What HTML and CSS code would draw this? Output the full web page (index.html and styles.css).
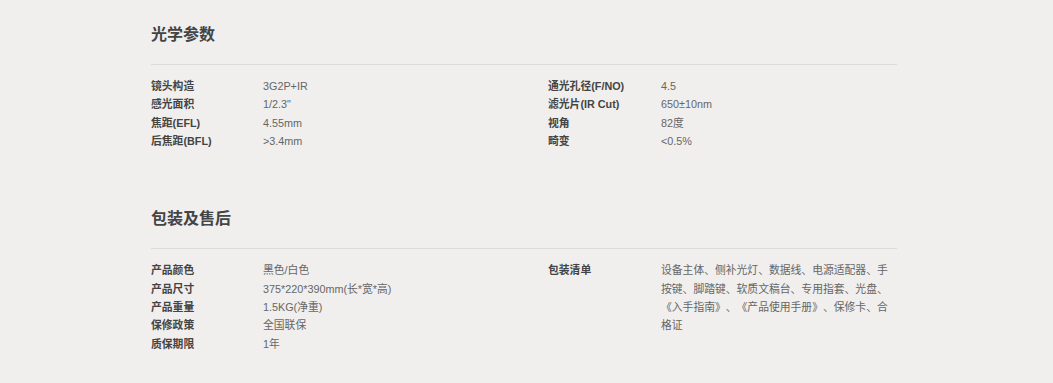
FILE: index.html
```html
<!DOCTYPE html>
<html lang="zh-CN">
<head>
<meta charset="utf-8">
<title>参数</title>
<link rel="stylesheet" href="styles.css">
</head>
<body>
<div class="page">
  <section class="spec first">
    <h2 class="spec-title">光学参数</h2>
    <div class="spec-body">
      <dl class="spec-col left">
        <div class="row"><dt>镜头构造</dt><dd>3G2P+IR</dd></div>
        <div class="row"><dt>感光面积</dt><dd>1/2.3"</dd></div>
        <div class="row"><dt>焦距(EFL)</dt><dd>4.55mm</dd></div>
        <div class="row"><dt>后焦距(BFL)</dt><dd>&gt;3.4mm</dd></div>
      </dl>
      <dl class="spec-col right">
        <div class="row"><dt>通光孔径(F/NO)</dt><dd>4.5</dd></div>
        <div class="row"><dt>滤光片(IR Cut)</dt><dd>650±10nm</dd></div>
        <div class="row"><dt>视角</dt><dd>82度</dd></div>
        <div class="row"><dt>畸变</dt><dd>&lt;0.5%</dd></div>
      </dl>
    </div>
  </section>
  <section class="spec second">
    <h2 class="spec-title">包装及售后</h2>
    <div class="spec-body">
      <dl class="spec-col left">
        <div class="row"><dt>产品颜色</dt><dd>黑色/白色</dd></div>
        <div class="row"><dt>产品尺寸</dt><dd>375*220*390mm(长*宽*高)</dd></div>
        <div class="row"><dt>产品重量</dt><dd>1.5KG(净重)</dd></div>
        <div class="row"><dt>保修政策</dt><dd>全国联保</dd></div>
        <div class="row"><dt>质保期限</dt><dd>1年</dd></div>
      </dl>
      <dl class="spec-col right">
        <div class="row"><dt>包装清单</dt><dd class="list">设备主体、侧补光灯、数据线、电源适配器、手按键、脚踏键、软质文稿台、专用指套、光盘、《入手指南》、《产品使用手册》、保修卡、合格证</dd></div>
      </dl>
    </div>
  </section>
</div>
</body>
</html>
```
FILE: styles.css
```css
html, body {
  margin: 0;
  padding: 0;
  background: #f0efed;
}
body {
  font-family: "Liberation Sans", "Noto Sans CJK SC", sans-serif;
  color: #444;
  text-spacing-trim: space-all;
}
.page {
  margin-left: 151px;
  width: 746px;
  padding-top: 25px;
}
.spec.second {
  margin-top: 59px;
}
.spec-title {
  margin: 0;
  font-size: 16px;
  line-height: 20px;
  font-weight: bold;
  color: #444;
  padding-bottom: 19px;
  border-bottom: 1px solid #dcdbd9;
}
.spec-body {
  display: flex;
  padding-top: 12px;
}
.spec-col {
  margin: 0;
  font-size: 10.8px;
  line-height: 18.33px;
}
.spec-col.left {
  width: 397px;
}
.spec-col.right {
  flex: 1;
}
.row {
  display: flex;
}
.row dt {
  width: 112px;
  flex: none;
  font-weight: bold;
  color: #444;
}
.spec-col.right .row dt {
  width: 113px;
}
.row dd {
  margin: 0;
  flex: 1;
  color: #666;
}
.row dd.list {
  text-spacing-trim: space-all;
  font-feature-settings: "halt" 0, "chws" 0;
}
```
